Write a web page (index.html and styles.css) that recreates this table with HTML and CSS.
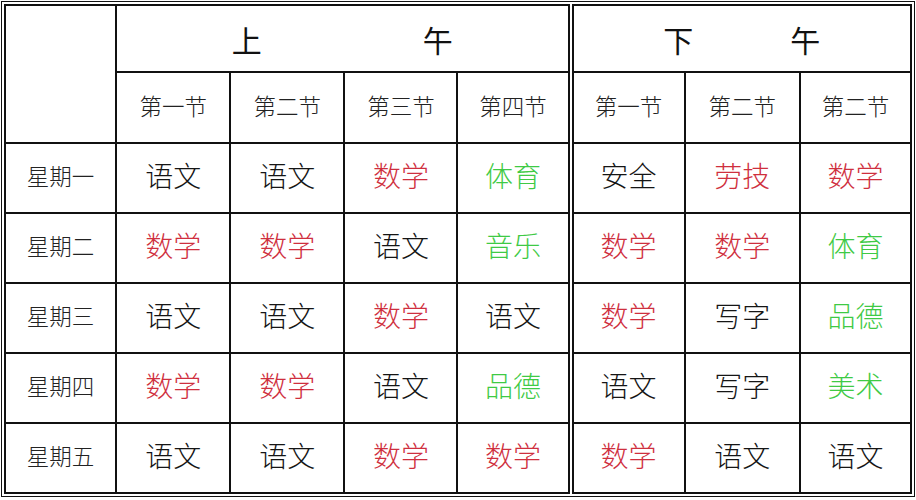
FILE: index.html
```
<!DOCTYPE html>
<html lang="zh">
<head>
<meta charset="utf-8">
<title>课程表</title>
<link rel="stylesheet" href="styles.css">
</head>
<body>
<div class="frame">
<table class="timetable">
<colgroup>
<col class="c-label">
<col class="c1"><col class="c2"><col class="c3"><col class="c4">
<col class="c5"><col class="c6"><col class="c7">
</colgroup>
<thead>
<tr class="r-half">
<th class="corner" rowspan="2"></th>
<th class="half" colspan="4"><span class="half-am"><span>上</span><span>午</span></span></th>
<th class="half pm-start" colspan="3"><span class="half-pm"><span>下</span><span>午</span></span></th>
</tr>
<tr class="r-period">
<th class="period">第一节</th>
<th class="period">第二节</th>
<th class="period">第三节</th>
<th class="period">第四节</th>
<th class="period pm-start">第一节</th>
<th class="period">第二节</th>
<th class="period">第二节</th>
</tr>
</thead>
<tbody>
<tr class="r-day">
<th class="day">星期一</th>
<td>语文</td><td>语文</td><td class="red">数学</td><td class="green">体育</td>
<td class="pm-start">安全</td><td class="red">劳技</td><td class="red">数学</td>
</tr>
<tr class="r-day">
<th class="day">星期二</th>
<td class="red">数学</td><td class="red">数学</td><td>语文</td><td class="green">音乐</td>
<td class="pm-start red">数学</td><td class="red">数学</td><td class="green">体育</td>
</tr>
<tr class="r-day">
<th class="day">星期三</th>
<td>语文</td><td>语文</td><td class="red">数学</td><td>语文</td>
<td class="pm-start red">数学</td><td>写字</td><td class="green">品德</td>
</tr>
<tr class="r-day">
<th class="day">星期四</th>
<td class="red">数学</td><td class="red">数学</td><td>语文</td><td class="green">品德</td>
<td class="pm-start">语文</td><td>写字</td><td class="green">美术</td>
</tr>
<tr class="r-day">
<th class="day">星期五</th>
<td>语文</td><td>语文</td><td class="red">数学</td><td class="red">数学</td>
<td class="pm-start red">数学</td><td>语文</td><td>语文</td>
</tr>
</tbody>
</table>
</div>
</body>
</html>
```
FILE: styles.css
```
html, body {
  margin: 0;
  padding: 0;
  background: #ffffff;
}

body {
  font-family: "Noto Sans CJK SC", "DejaVu Sans", sans-serif;
  color: #111111;
}

.frame {
  box-sizing: border-box;
  width: 914px;
  margin: 1px 0 0 1px;
  border: 1px solid #111;
  padding: 2px;
}

.timetable {
  width: 908px;
  border-collapse: collapse;
  table-layout: fixed;
  border: 2px solid #111;
}

.c-label { width: 111px; }
.c1 { width: 114px; }
.c2 { width: 114px; }
.c3 { width: 113px; }
.c4 { width: 113px; }
.c5 { width: 114px; }
.c6 { width: 115px; }
.c7 { width: 111px; }

.timetable th,
.timetable td {
  border: 2px solid #111;
  padding: 0 0 5px 0;
  text-align: center;
  vertical-align: middle;
  font-weight: 300;
  line-height: 1.2;
}

.timetable .pm-start {
  border-left: 6px double #111;
}

.r-half { height: 67px; }
.r-period { height: 71px; }
.r-day { height: 70px; }

.timetable .half {
  font-size: 30px;
  font-weight: 400;
  line-height: 1;
  padding: 0;
}

.half-am,
.half-pm {
  display: flex;
  justify-content: center;
}

.half-am { gap: 161px; padding-top: 1px; }
.half-pm { gap: 97px; padding-top: 1px; }

.period,
.day {
  font-size: 22.5px;
  color: #222;
}

.timetable td {
  font-size: 28px;
  color: #151515;
}

.timetable td.red { color: #cf2f3e; }
.timetable td.green { color: #3fca45; }
```
